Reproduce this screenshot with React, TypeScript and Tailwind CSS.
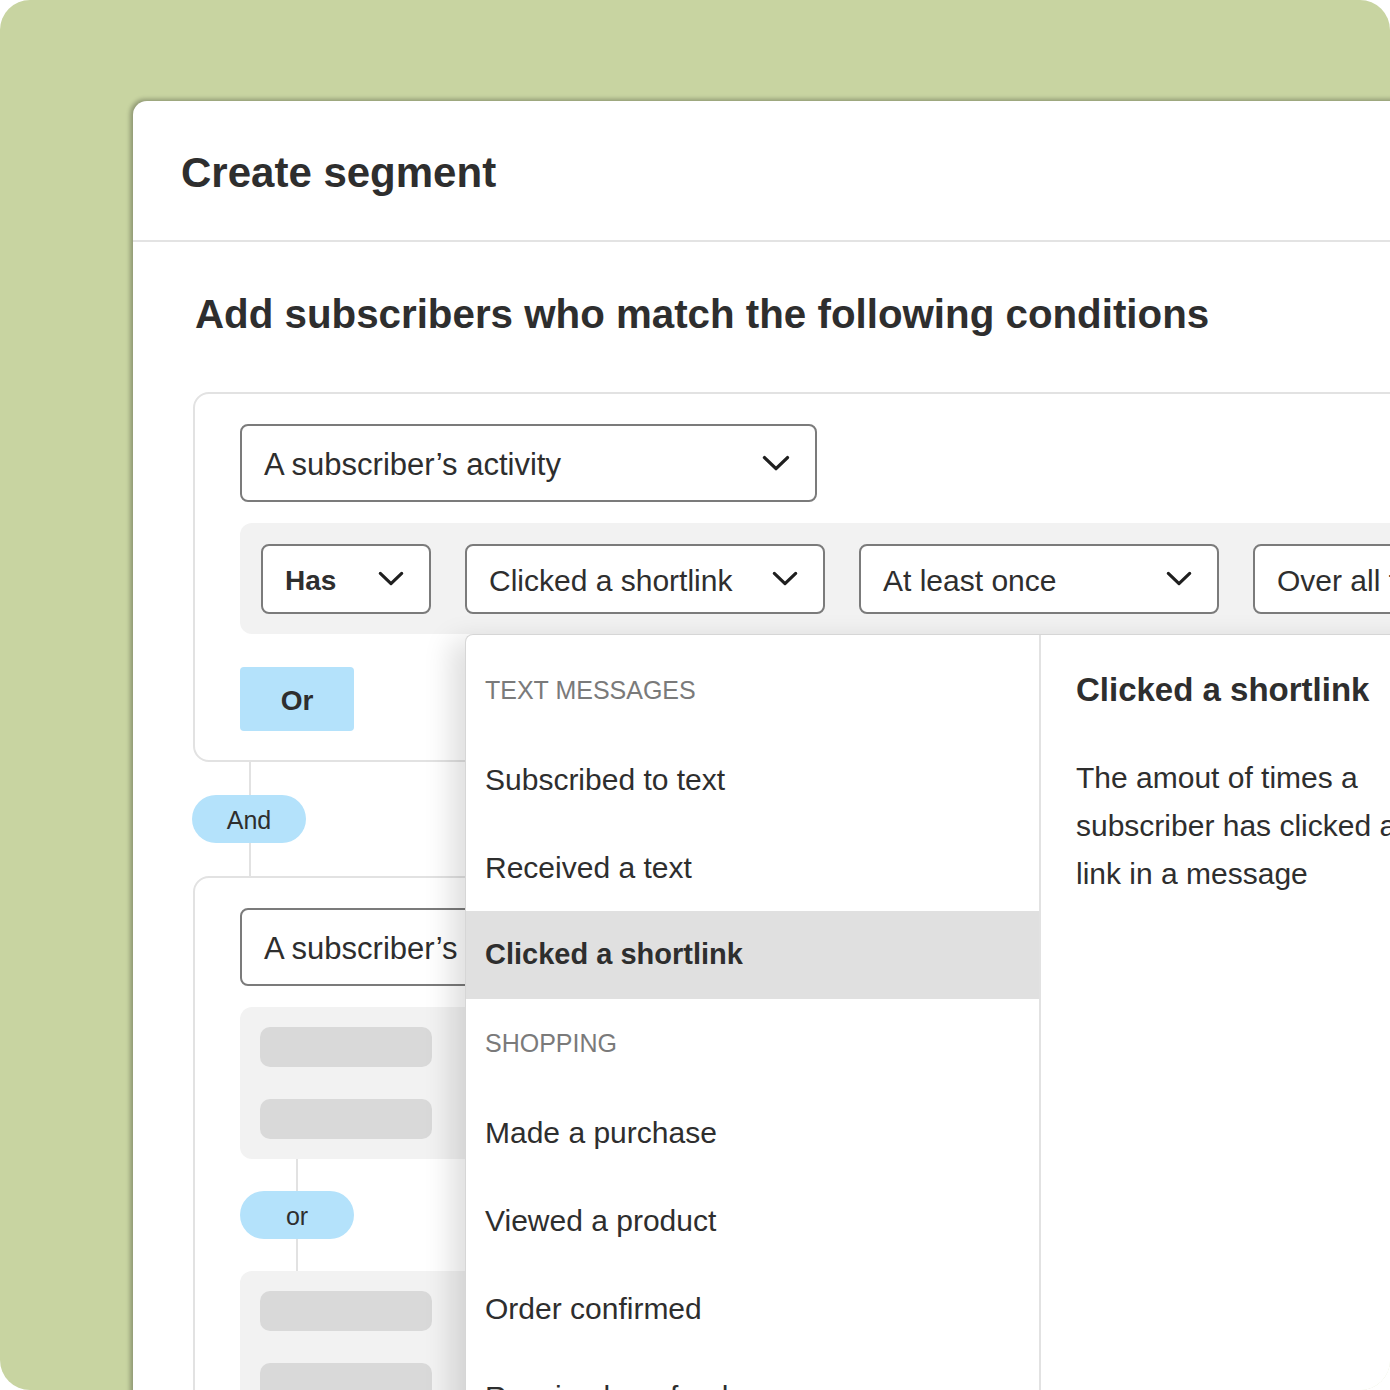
import React from 'react';

const font = { fontFamily: '"Liberation Sans", Arial, sans-serif' };

function Chevron({ w = 28, h = 16 }: { w?: number; h?: number }) {
  return (
    <svg width={w} height={h} viewBox="0 0 28 16" fill="none" className="shrink-0">
      <path d="M2.5 2.5 L14 13.5 L25.5 2.5" stroke="#1f1f1f" strokeWidth="3.4" strokeLinecap="round" strokeLinejoin="round" />
    </svg>
  );
}

function Select({
  label,
  width,
  height,
  bold,
  size = 'text-[30px]',
  chevronW = 26,
}: {
  label: string;
  width: string;
  height: string;
  bold?: boolean;
  size?: string;
  chevronW?: number;
}) {
  return (
    <div
      className={`${width} ${height} shrink-0 bg-white border-2 border-[#7b7b7b] rounded-[8px] flex items-center justify-between pl-[22px] pr-[25px] overflow-hidden`}
    >
      <span className={`${size} ${bold ? 'font-bold' : 'font-normal'} pt-[4px] text-[#2e2e2e] whitespace-nowrap`}>{label}</span>
      <Chevron w={chevronW} h={chevronW * 0.58} />
    </div>
  );
}

function Pill({ label }: { label: string }) {
  return (
    <div className="w-[114px] h-[48px] rounded-full bg-[#b4e2fb] flex items-center justify-center pt-[3px] text-[25px] text-[#2e2e2e]">
      {label}
    </div>
  );
}

function Bar() {
  return <div className="w-[172px] h-[40px] rounded-[10px] bg-[#d9d9d9]" />;
}

const textItems = ['Subscribed to text', 'Received a text'];
const shopItems = ['Made a purchase', 'Viewed a product', 'Order confirmed', 'Received a refund'];

function Dropdown() {
  return (
    <div className="absolute left-[225px] top-full z-10 flex h-[800px] bg-white rounded-tl-[8px] border-t border-l border-[#d6d6d6] shadow-[-14px_6px_28px_rgba(0,0,0,0.13)]">
      <div className="w-[573px] pt-[12px]">
        <div className="h-[88px] flex items-center pl-[19px] text-[25px] text-[#7a7a7a] uppercase">Text messages</div>
        {textItems.map((item) => (
          <div key={item} className="h-[88px] flex items-center pl-[19px] text-[30px] text-[#2e2e2e]">
            {item}
          </div>
        ))}
        <div className="h-[88px] flex items-center pl-[19px] text-[29px] font-bold text-[#2e2e2e] bg-[#e0e0e0]">
          Clicked a shortlink
        </div>
        <div className="h-[89px] flex items-center pl-[19px] text-[25px] text-[#7a7a7a] uppercase">Shopping</div>
        {shopItems.map((item) => (
          <div key={item} className="h-[88px] flex items-center pl-[19px] text-[30px] text-[#2e2e2e] whitespace-nowrap">
            {item}
          </div>
        ))}
      </div>
      <div className="w-[460px] border-l-2 border-[#e2e2e2] pt-[31px] pl-[35px]">
        <h3 className="text-[33px] font-bold leading-[48px] text-[#2e2e2e] whitespace-nowrap">Clicked a shortlink</h3>
        <p className="mt-[40px] w-[345px] text-[30px] leading-[48px] text-[#2e2e2e]">
          The amout of times a subscriber has clicked a link in a message
        </p>
      </div>
    </div>
  );
}

export default function App() {
  return (
    <div className="w-[1390px] h-[1390px] bg-[#c8d4a1] rounded-[30px] overflow-hidden pt-[101px] pl-[133px]" style={font}>
      <div className="w-[1500px] h-[1400px] bg-white rounded-tl-[14px] shadow-[-2px_-1px_4px_1px_rgba(0,0,0,0.28)]">
        {/* header */}
        <div className="h-[141px] flex items-center pl-[48px] pt-[4px] border-b-2 border-[#e3e3e3]">
          <h1 className="text-[42px] font-bold text-[#2e2e2e]">Create segment</h1>
        </div>

        <div className="pl-[60px] pt-[49px]">
          <h2 className="text-[40.3px] font-bold text-[#2e2e2e] leading-[48px] pl-[2px]">
            Add subscribers who match the following conditions
          </h2>

          {/* first condition group */}
          <div className="mt-[53px] border-2 border-[#e2e2e2] rounded-[16px] pt-[30px] pl-[45px] pb-[29px]">
            <Select label="A subscriber’s activity" width="w-[577px]" height="h-[78px]" size="text-[31px]" chevronW={28} />

            <div className="relative mt-[21px] h-[111px] bg-[#f2f2f2] rounded-[12px] pl-[21px] flex items-center gap-[34px]">
              <Select label="Has" width="w-[170px]" height="h-[70px]" bold size="text-[28px]" />
              <Select label="Clicked a shortlink" width="w-[360px]" height="h-[70px]" />
              <Select label="At least once" width="w-[360px]" height="h-[70px]" />
              <Select label="Over all time" width="w-[360px]" height="h-[70px]" />
              <Dropdown />
            </div>

            <button className="mt-[33px] w-[114px] h-[64px] rounded-[4px] bg-[#b4e2fb] pt-[3px] text-[28px] font-bold text-[#2e2e2e]">
              Or
            </button>
          </div>

          {/* and connector */}
          <div className="flex flex-col">
            <div className="ml-[56px] w-[2px] h-[33px] bg-[#e2e2e2]" />
            <div className="-ml-[1px]">
              <Pill label="And" />
            </div>
            <div className="ml-[56px] w-[2px] h-[33px] bg-[#e2e2e2]" />
          </div>

          {/* second condition group */}
          <div className="border-2 border-[#e2e2e2] rounded-[16px] pt-[30px] pl-[45px] h-[700px]">
            <Select label="A subscriber’s activity" width="w-[577px]" height="h-[78px]" size="text-[31px]" chevronW={28} />

            <div className="mt-[21px] w-[577px] h-[152px] bg-[#f2f2f2] rounded-[12px] p-[20px] flex flex-col gap-[32px]">
              <Bar />
              <Bar />
            </div>
            <div className="flex flex-col">
              <div className="ml-[56px] w-[2px] h-[32px] bg-[#e2e2e2]" />
              <Pill label="or" />
              <div className="ml-[56px] w-[2px] h-[32px] bg-[#e2e2e2]" />
            </div>
            <div className="w-[577px] h-[152px] bg-[#f2f2f2] rounded-[12px] p-[20px] flex flex-col gap-[32px]">
              <Bar />
              <Bar />
            </div>
          </div>
        </div>
      </div>
    </div>
  );
}
